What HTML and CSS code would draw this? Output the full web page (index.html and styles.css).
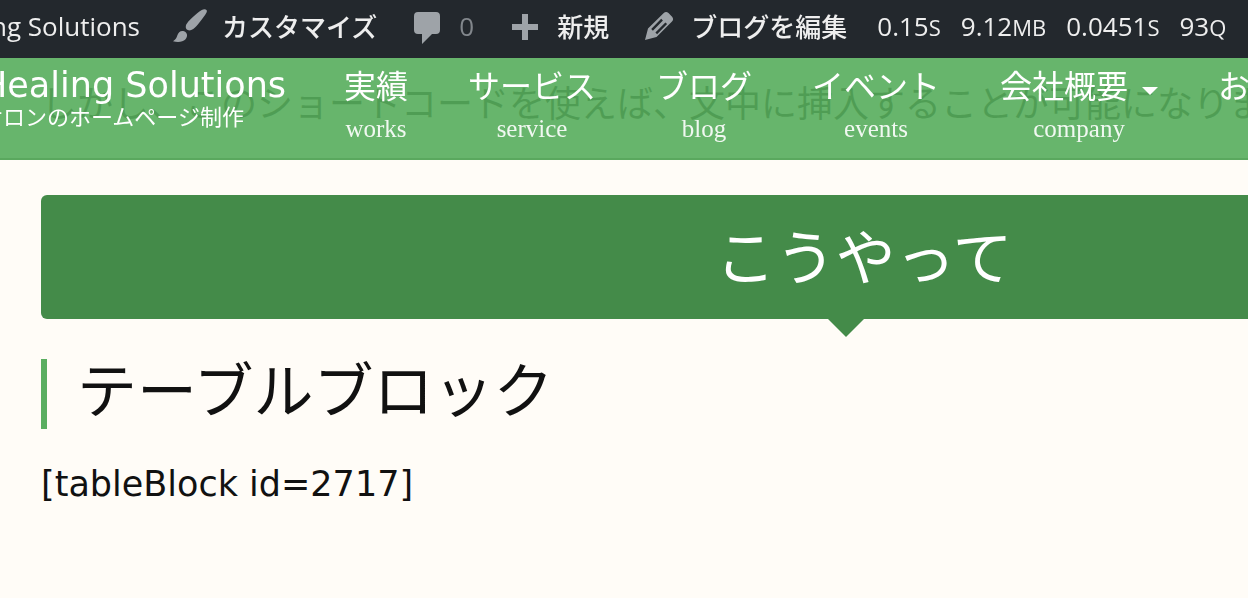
FILE: index.html
```html
<!DOCTYPE html>
<html lang="ja">
<head>
    <meta charset="UTF-8">
    <meta name="viewport" content="width=device-width, initial-scale=1.0">
    <title>Healing Solutions</title>
    <link rel="stylesheet" href="styles.css">
</head>
<body>
    <div class="admin-bar">
        <a class="admin-item site-name" href="#">Healing Solutions</a>
        <a class="admin-item" href="#">
            <svg class="icon" viewBox="0 0 40 40" aria-hidden="true">
                <path d="M36.500 4C34.500 2.300 31 4.200 27.500 7C22 11.500 16.500 16.500 15.800 20C15.300 23 17.300 24.800 20.500 24.300C24 23.700 28.500 18 32.500 12.500C35 9 38 5.500 36.500 4Z"/>
                <path d="M14 25.200C10.500 24.300 8.300 26.500 7.300 29.500C6.500 32 5.500 33.800 3 35.300C8 36.400 13 36 15.300 33.500C18.300 30.400 17.200 26.200 14 25.200Z"/>
            </svg>
            <span>カスタマイズ</span>
        </a>
        <a class="admin-item" href="#">
            <svg class="icon" viewBox="0 0 40 40" aria-hidden="true">
                <path d="M11 6h18q4 0 4 4v14q0 4-4 4h-4L15 38V28h-4q-4 0-4-4V10q0-4 4-4z"/>
            </svg>
            <span class="count">0</span>
        </a>
        <a class="admin-item" href="#">
            <svg class="icon" viewBox="0 0 40 40" aria-hidden="true">
                <path d="M17 8h6v10h10v6H23v10h-6V24H7v-6h10z"/>
            </svg>
            <span>新規</span>
        </a>
        <a class="admin-item" href="#">
            <svg class="icon" viewBox="0 0 40 40" aria-hidden="true">
                <path fill-rule="evenodd" d="M24.500 7.200Q27 4.800 29.500 7L33.300 11Q35 13.300 33 15.500L17.500 31L6 34L9 22.500ZM22.200 12.800L12.200 23L13.900 24.700L23.900 14.500ZM26.400 16.400L16.400 26.600L18.100 28.300L28.100 18.100Z"/>
            </svg>
            <span>ブログを編集</span>
        </a>
        <a class="admin-item stats" href="#">
            <span>0.15<small>S</small></span>
            <span>9.12<small>MB</small></span>
            <span>0.0451<small>S</small></span>
            <span>93<small>Q</small></span>
        </a>
    </div>

    <header class="header">
        <a class="brand" href="#">
            <span class="brand-title">Healing Solutions</span>
            <span class="brand-copy">サロンのホームページ制作</span>
        </a>
        <nav class="nav">
            <a class="nav-item" href="#">実績<span class="nav-sub">works</span></a>
            <a class="nav-item" href="#">サービス<span class="nav-sub">service</span></a>
            <a class="nav-item" href="#">ブログ<span class="nav-sub">blog</span></a>
            <a class="nav-item" href="#">イベント<span class="nav-sub">events</span></a>
            <a class="nav-item" href="#"><span class="nav-label">会社概要<span class="caret"></span></span><span class="nav-sub">company</span></a>
            <a class="nav-item" href="#">お</a>
        </nav>
    </header>

    <main class="content">
        <p class="lead">しかし、このショートコードを使えば、文中に挿入することが可能になりま</p>
        <h2 class="banner">こうやって</h2>
        <h3 class="heading">テーブルブロック</h3>
        <p class="text">[tableBlock id=2717]</p>
    </main>
</body>
</html>
```
FILE: styles.css
```css
* {
    box-sizing: border-box;
}
body {
    margin: 0;
    padding-top: 58px;
    overflow: hidden;
    background: #fffcf7;
    color: #111;
    font-family: Verdana, "DejaVu Sans", "Noto Sans CJK JP", sans-serif;
    font-size: 36px;
    white-space: nowrap;
}
a {
    color: inherit;
    text-decoration: none;
}

/* admin bar */
.admin-bar {
    position: fixed;
    top: 0;
    left: 0;
    right: 0;
    z-index: 2;
    display: flex;
    gap: 30px;
    height: 58px;
    padding-bottom: 6px;
    background: #23282d;
    color: #eee;
    font-family: "Open Sans", "Noto Sans CJK JP", sans-serif;
    font-size: 26px;
    font-weight: 500;
}
.admin-item {
    display: flex;
    flex-shrink: 0;
    align-items: center;
    gap: 12px;
}
.site-name {
    justify-content: flex-end;
    width: 140px;
}
.icon {
    width: 40px;
    height: 40px;
    fill: #9ea3a8;
}
.count {
    min-width: 16px;
    color: #82878c;
    font-weight: 400;
}
.stats {
    gap: 20px;
}
.stats small {
    font-size: 22px;
}

/* header */
.header {
    position: fixed;
    top: 58px;
    left: 0;
    right: 0;
    z-index: 1;
    display: flex;
    gap: 60px;
    height: 102px;
    padding-top: 5px;
    border-bottom: 2px solid #5aa85e;
    background: rgba(87, 173, 92, 0.9);
    color: #fff;
}
.brand {
    display: flex;
    flex-direction: column;
    flex-shrink: 0;
    width: 303px;
    margin-left: -19px;
}
.brand-title {
    font-size: 35px;
    line-height: 44px;
}
.brand-copy {
    font-size: 22px;
    line-height: 22px;
}
.nav {
    display: flex;
    gap: 60px;
    font-size: 32px;
    line-height: 48px;
}
.nav-item {
    display: flex;
    flex-direction: column;
    flex-shrink: 0;
    align-items: center;
}
.nav-label {
    display: flex;
    align-items: center;
    gap: 14px;
}
.caret {
    margin-top: 8px;
    border: 8px solid transparent;
    border-top-color: #fff;
    border-bottom: 0;
}
.nav-sub {
    font-family: "Liberation Serif", serif;
    font-size: 25px;
    line-height: 36px;
    opacity: 0.9;
}

/* content */
.content {
    padding: 20px 0 0 41px;
}
.lead {
    margin: 0 0 63px;
    line-height: 54px;
}
.banner {
    position: relative;
    margin: 0 -439px 40px 0;
    padding-top: 4px;
    border-radius: 6px;
    background: #448b49;
    color: #fff;
    font-size: 60px;
    font-weight: 400;
    line-height: 120px;
    text-align: center;
}
.banner::after {
    content: "";
    position: absolute;
    top: 100%;
    left: 50%;
    margin-left: -36px;
    border: 18px solid transparent;
    border-top-color: #448b49;
    border-bottom: 0;
}
.heading {
    margin: 0 0 28px;
    padding: 0 0 4px 30px;
    border-left: 6px solid #5aae60;
    font-size: 60px;
    font-weight: 400;
    line-height: 66px;
}
.text {
    margin: 0;
    font-size: 35px;
    line-height: 54px;
}
```
